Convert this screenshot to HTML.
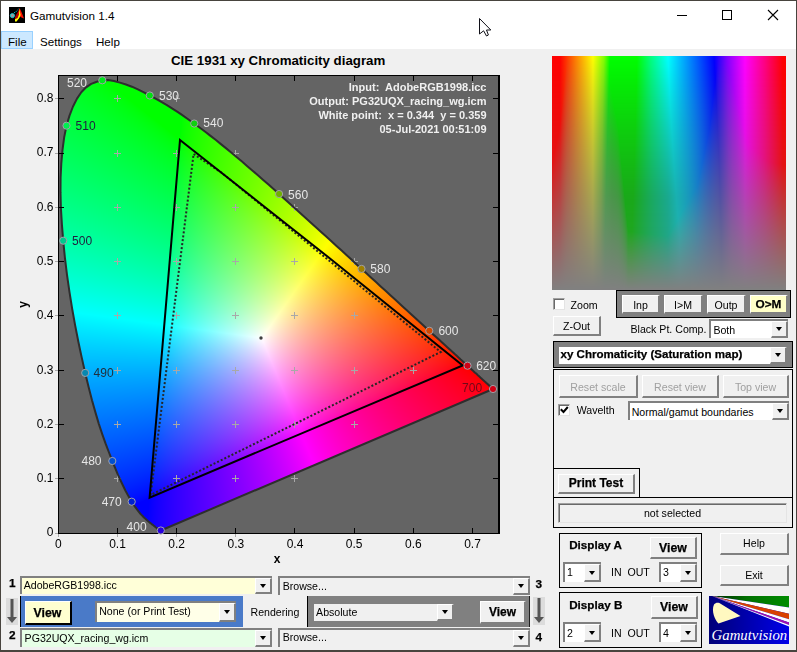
<!DOCTYPE html>
<html><head><meta charset="utf-8">
<style>
html,body{margin:0;padding:0;}
body{width:797px;height:652px;overflow:hidden;position:relative;background:#f0f0f0;font-family:"Liberation Sans",sans-serif;color:#000;}
.a{position:absolute;}
.t{position:absolute;white-space:nowrap;font-size:12px;line-height:14px;}
.b{font-weight:bold;-webkit-text-stroke:0.25px #000;}
.btn{position:absolute;box-sizing:border-box;background:#f0f0f0;border-top:1px solid #fff;border-left:1px solid #fff;border-right:1px solid #696969;border-bottom:1px solid #696969;box-shadow:inset -1px -1px 0 #a0a0a0;font-size:11px;text-align:center;white-space:nowrap;}
.sunk{position:absolute;box-sizing:border-box;border-top:1px solid #a0a0a0;border-left:1px solid #a0a0a0;border-right:1px solid #fff;border-bottom:1px solid #fff;box-shadow:inset 1px 1px 0 #696969;}
.dd{position:absolute;box-sizing:border-box;background:#fff;border:2px solid #8a8a8a;border-right-color:#b4b4b4;border-bottom-color:#b4b4b4;font-size:11px;white-space:nowrap;overflow:hidden;}
.dd .tx{position:absolute;left:3px;top:2px;line-height:13px;}
.dd .ar{position:absolute;right:0;top:0;bottom:0;width:16px;box-sizing:border-box;background:#f0f0f0;border-top:1px solid #fff;border-left:1px solid #fff;border-right:1px solid #696969;border-bottom:1px solid #696969;box-shadow:inset -1px -1px 0 #a0a0a0;}
.dd .ar:after{content:"";position:absolute;left:4px;top:6px;border-left:3.5px solid transparent;border-right:3.5px solid transparent;border-top:4px solid #000;}
</style></head><body>
<!-- window chrome -->
<div class="a" style="left:0;top:0;width:797px;height:31px;background:#fff;"></div>
<div class="a" style="left:0;top:31px;width:797px;height:18px;background:#fff;"></div>
<div class="a" style="left:1px;top:31px;width:32px;height:18px;box-sizing:border-box;background:#cce8ff;border:1px solid #99d1ff;"></div>
<div class="a" style="left:0;top:0;width:797px;height:1px;background:#48443e;"></div>
<div class="a" style="left:0;top:0;width:1px;height:652px;background:#48443e;"></div>
<div class="a" style="left:796px;top:0;width:1px;height:652px;background:#48443e;"></div>
<div class="a" style="left:0;top:650px;width:797px;height:2px;background:#48443e;"></div>
<!-- app icon -->
<svg class="a" style="left:9px;top:7px" width="16" height="16" viewBox="0 0 16 16">
<rect width="16" height="16" fill="#000"/>
<path d="M10.5,1 L12.5,5 L15,11.5 L12.5,10.5 L11,9.5 L8.5,13 L6,13.5 L6.5,10 L9,5.5 Z" fill="#ff1000"/>
<path d="M9,5 L10.3,9 L7.5,12.5 L5.8,11.5 L7,8 Z" fill="#b00000"/>
<path d="M10.3,1.8 L11.6,8 L10.2,11 L7.6,14.5 L6,14.5 L6,12.2 L8.6,11 L10,7.5 Z" fill="#ffff00"/>
<circle cx="3.4" cy="8.6" r="2.1" fill="#a09898" stroke="#00e0e8" stroke-width="0.8"/>
<path d="M5,5.8 L7,4.8 L8.5,3.2 L9.6,1.6" stroke="#00c0c8" stroke-width="1" fill="none" stroke-dasharray="1.2,0.8"/>
</svg>
<div class="t" style="left:30px;top:9px;font-size:11.7px;">Gamutvision 1.4</div>
<!-- window buttons -->
<div class="a" style="left:677px;top:15px;width:10px;height:1px;background:#000;"></div>
<div class="a" style="left:722px;top:10px;width:10px;height:10px;box-sizing:border-box;border:1px solid #000;"></div>
<svg class="a" style="left:767px;top:9px" width="12" height="12" viewBox="0 0 12 12"><path d="M1,1 L11,11 M11,1 L1,11" stroke="#000" stroke-width="1.1"/></svg>
<!-- cursor -->
<svg class="a" style="left:476px;top:15px" width="20" height="25" viewBox="476 15 20 25"><path d="M479.5,18.5 L479.5,34 L483.6,30.8 L486.5,36 L488.4,35 L486.5,30 L490.8,30 Z" fill="#fff" stroke="#101018" stroke-width="1" stroke-linejoin="round"/></svg>
<!-- menu -->
<div class="t" style="left:8px;top:34.5px;font-size:11.6px;">File</div>
<div class="t" style="left:40px;top:34.5px;font-size:11.6px;">Settings</div>
<div class="t" style="left:96px;top:34.5px;font-size:11.6px;">Help</div>
<!-- plot -->
<div class="t" style="left:171px;top:53px;font-size:13.3px;font-weight:bold;line-height:16px;">CIE 1931 xy Chromaticity diagram</div>
<div class="a" style="left:59px;top:76px;width:439px;height:457px;background:#646464;"></div>
<div class="a" style="left:59px;top:76px;width:439px;height:456px;clip-path:polygon(101.8px 454.5px,101.8px 454.5px,101.8px 454.5px,101.7px 454.5px,101.7px 454.5px,101.6px 454.5px,101.6px 454.5px,101.5px 454.5px,101.4px 454.5px,101.4px 454.5px,101.3px 454.5px,101.2px 454.5px,101.1px 454.5px,101.0px 454.5px,100.9px 454.4px,100.8px 454.4px,100.7px 454.3px,100.6px 454.3px,100.4px 454.2px,100.2px 454.1px,100.1px 454.0px,99.9px 453.8px,99.7px 453.7px,99.5px 453.5px,99.2px 453.4px,99.0px 453.2px,98.7px 452.9px,98.4px 452.7px,98.1px 452.4px,97.7px 452.1px,97.4px 451.8px,97.0px 451.5px,96.6px 451.2px,96.1px 450.8px,95.7px 450.4px,95.2px 450.0px,94.6px 449.6px,94.0px 449.1px,93.4px 448.6px,92.7px 448.1px,92.0px 447.5px,91.2px 446.9px,90.4px 446.2px,89.5px 445.5px,88.6px 444.8px,87.7px 443.9px,86.7px 443.0px,85.6px 442.1px,84.5px 441.0px,83.4px 439.8px,82.2px 438.6px,80.9px 437.2px,79.5px 435.4px,78.0px 433.4px,76.3px 431.2px,74.6px 428.7px,72.7px 425.7px,70.8px 422.4px,68.7px 418.8px,66.5px 414.7px,64.2px 410.0px,61.7px 404.7px,59.0px 398.8px,56.3px 392.3px,53.3px 385.0px,50.2px 377.0px,46.8px 368.2px,43.4px 358.6px,39.9px 348.1px,36.5px 336.6px,33.0px 324.2px,29.6px 310.9px,26.2px 296.9px,22.8px 281.9px,19.4px 266.0px,16.2px 249.6px,13.2px 233.0px,10.5px 216.1px,8.0px 198.8px,5.9px 181.6px,4.2px 164.7px,2.9px 148.3px,1.9px 132.1px,1.5px 116.4px,1.6px 101.5px,2.3px 87.4px,3.5px 73.8px,5.2px 61.1px,7.5px 49.7px,10.5px 39.6px,14.0px 30.5px,18.0px 22.6px,22.3px 16.2px,27.1px 11.3px,32.2px 7.9px,37.7px 5.7px,43.3px 4.3px,49.0px 4.1px,54.9px 5.0px,60.9px 6.6px,66.9px 8.5px,72.9px 10.7px,78.9px 13.4px,84.9px 16.4px,90.8px 19.5px,96.6px 22.6px,102.3px 25.9px,107.9px 29.2px,113.4px 32.7px,118.9px 36.2px,124.4px 39.9px,129.8px 43.7px,135.2px 47.5px,140.5px 51.5px,145.9px 55.5px,151.2px 59.6px,156.6px 63.8px,161.9px 68.1px,167.2px 72.4px,172.5px 76.8px,177.8px 81.2px,183.0px 85.6px,188.3px 90.2px,193.6px 94.7px,198.9px 99.3px,204.2px 103.9px,209.5px 108.6px,214.8px 113.3px,220.1px 118.0px,225.3px 122.7px,230.6px 127.5px,235.9px 132.2px,241.1px 136.9px,246.4px 141.7px,251.6px 146.4px,256.9px 151.2px,262.1px 155.9px,267.2px 160.6px,272.4px 165.3px,277.5px 170.0px,282.6px 174.6px,287.7px 179.2px,292.7px 183.8px,297.6px 188.4px,302.5px 192.9px,307.4px 197.3px,312.2px 201.7px,317.0px 206.1px,321.7px 210.4px,326.3px 214.6px,330.8px 218.7px,335.3px 222.8px,339.6px 226.8px,343.9px 230.7px,348.1px 234.5px,352.1px 238.2px,356.0px 241.8px,359.8px 245.2px,363.4px 248.5px,366.9px 251.7px,370.3px 254.8px,373.6px 257.9px,376.8px 260.8px,379.9px 263.6px,382.8px 266.3px,385.6px 268.8px,388.3px 271.2px,390.8px 273.5px,393.3px 275.7px,395.5px 277.8px,397.7px 279.8px,399.8px 281.7px,401.7px 283.5px,403.6px 285.2px,405.3px 286.8px,406.9px 288.3px,408.5px 289.7px,409.9px 291.0px,411.3px 292.3px,412.6px 293.5px,413.8px 294.6px,415.0px 295.7px,416.1px 296.7px,417.2px 297.6px,418.2px 298.5px,419.1px 299.4px,420.1px 300.3px,420.9px 301.1px,421.8px 301.9px,422.6px 302.6px,423.3px 303.3px,424.0px 303.9px,424.7px 304.6px,425.4px 305.2px,426.0px 305.7px,426.6px 306.2px,427.1px 306.7px,427.6px 307.1px,428.0px 307.6px,428.5px 307.9px,428.9px 308.3px,429.3px 308.7px,429.6px 309.0px,429.9px 309.3px,430.2px 309.6px,430.5px 309.8px,430.8px 310.1px,431.0px 310.3px,431.2px 310.5px,431.4px 310.7px,431.6px 310.8px,431.7px 311.0px,431.9px 311.1px,432.0px 311.2px,432.2px 311.3px,432.3px 311.5px,432.4px 311.6px,432.5px 311.7px,432.6px 311.8px,432.7px 311.9px,432.8px 312.0px,432.9px 312.1px,433.0px 312.1px,433.2px 312.2px,433.3px 312.3px,433.3px 312.4px,433.4px 312.5px,433.5px 312.6px,433.6px 312.7px,433.7px 312.7px,433.7px 312.8px,433.8px 312.8px,433.8px 312.9px,433.9px 312.9px,433.9px 312.9px,433.9px 313.0px,434.0px 313.0px,434.0px 313.0px,434.0px 313.0px,434.0px 313.0px,434.0px 313.0px);background:radial-gradient(circle at 202px 262px,#fff 0,rgba(255,255,255,0.85) 25px,rgba(255,255,255,0.35) 80px,rgba(255,255,255,0) 140px),conic-gradient(from 0deg at 202px 262px,#80ff00 7deg,#ffff00 55deg,#ff0000 97deg,#ff00ff 146deg,#8000ff 180deg,#0000ff 215deg,#00ffff 275deg,#00ff80 300deg,#00ff00 328deg,#80ff00 367deg);"></div>
<canvas id="cv" class="a" style="left:59px;top:76px" width="439" height="456"></canvas>
<svg class="a" style="left:0;top:0" width="797" height="652" viewBox="0 0 797 652">
<path d="M55.0,98.5h7M58.5,95.0v7M114.0,98.5h7M117.5,95.0v7M173.0,98.5h7M176.5,95.0v7M55.0,153.5h7M58.5,150.0v7M114.0,153.5h7M117.5,150.0v7M173.0,153.5h7M176.5,150.0v7M232.0,153.5h7M235.5,150.0v7M55.0,207.5h7M58.5,204.0v7M114.0,207.5h7M117.5,204.0v7M173.0,207.5h7M176.5,204.0v7M232.0,207.5h7M235.5,204.0v7M291.0,207.5h7M294.5,204.0v7M55.0,261.5h7M58.5,258.0v7M114.0,261.5h7M117.5,258.0v7M173.0,261.5h7M176.5,258.0v7M232.0,261.5h7M235.5,258.0v7M291.0,261.5h7M294.5,258.0v7M351.0,261.5h7M354.5,258.0v7M55.0,315.5h7M58.5,312.0v7M114.0,315.5h7M117.5,312.0v7M173.0,315.5h7M176.5,312.0v7M232.0,315.5h7M235.5,312.0v7M291.0,315.5h7M294.5,312.0v7M351.0,315.5h7M354.5,312.0v7M55.0,370.5h7M58.5,367.0v7M114.0,370.5h7M117.5,367.0v7M173.0,370.5h7M176.5,367.0v7M232.0,370.5h7M235.5,367.0v7M291.0,370.5h7M294.5,367.0v7M351.0,370.5h7M354.5,367.0v7M410.0,370.5h7M413.5,367.0v7M55.0,424.5h7M58.5,421.0v7M114.0,424.5h7M117.5,421.0v7M173.0,424.5h7M176.5,421.0v7M232.0,424.5h7M235.5,421.0v7M291.0,424.5h7M294.5,421.0v7M351.0,424.5h7M354.5,421.0v7M55.0,478.5h7M58.5,475.0v7M114.0,478.5h7M117.5,475.0v7M173.0,478.5h7M176.5,475.0v7M232.0,478.5h7M235.5,475.0v7M291.0,478.5h7M294.5,475.0v7M55.0,533.5h7M58.5,530.0v7M114.0,533.5h7M117.5,530.0v7M173.0,533.5h7M176.5,530.0v7M232.0,533.5h7M235.5,530.0v7" stroke="#a8a8a8" stroke-width="1" fill="none"/>
<path d="M160.8,530.5 L160.8,530.5 L160.8,530.5 L160.7,530.5 L160.7,530.5 L160.6,530.5 L160.6,530.5 L160.5,530.5 L160.4,530.5 L160.4,530.5 L160.3,530.5 L160.2,530.5 L160.1,530.5 L160.0,530.5 L159.9,530.4 L159.8,530.4 L159.7,530.3 L159.6,530.3 L159.4,530.2 L159.2,530.1 L159.1,530.0 L158.9,529.8 L158.7,529.7 L158.5,529.5 L158.2,529.4 L158.0,529.2 L157.7,528.9 L157.4,528.7 L157.1,528.4 L156.7,528.1 L156.4,527.8 L156.0,527.5 L155.6,527.2 L155.1,526.8 L154.7,526.4 L154.2,526.0 L153.6,525.6 L153.0,525.1 L152.4,524.6 L151.7,524.1 L151.0,523.5 L150.2,522.9 L149.4,522.2 L148.5,521.5 L147.6,520.8 L146.7,519.9 L145.7,519.0 L144.6,518.1 L143.5,517.0 L142.4,515.8 L141.2,514.6 L139.9,513.2 L138.5,511.4 L137.0,509.4 L135.3,507.2 L133.6,504.7 L131.7,501.7 L129.8,498.4 L127.7,494.8 L125.5,490.7 L123.2,486.0 L120.7,480.7 L118.0,474.8 L115.3,468.3 L112.3,461.0 L109.2,453.0 L105.8,444.2 L102.4,434.6 L98.9,424.1 L95.5,412.6 L92.0,400.2 L88.6,386.9 L85.2,372.9 L81.8,357.9 L78.4,342.0 L75.2,325.6 L72.2,309.0 L69.5,292.1 L67.0,274.8 L64.9,257.6 L63.2,240.7 L61.9,224.3 L60.9,208.1 L60.5,192.4 L60.6,177.5 L61.3,163.4 L62.5,149.8 L64.2,137.1 L66.5,125.7 L69.5,115.6 L73.0,106.5 L77.0,98.6 L81.3,92.2 L86.1,87.3 L91.2,83.9 L96.7,81.7 L102.3,80.3 L108.0,80.1 L113.9,81.0 L119.9,82.6 L125.9,84.5 L131.9,86.7 L137.9,89.4 L143.9,92.4 L149.8,95.5 L155.6,98.6 L161.3,101.9 L166.9,105.2 L172.4,108.7 L177.9,112.2 L183.4,115.9 L188.8,119.7 L194.2,123.5 L199.5,127.5 L204.9,131.5 L210.2,135.6 L215.6,139.8 L220.9,144.1 L226.2,148.4 L231.5,152.8 L236.8,157.2 L242.0,161.6 L247.3,166.2 L252.6,170.7 L257.9,175.3 L263.2,179.9 L268.5,184.6 L273.8,189.3 L279.1,194.0 L284.3,198.7 L289.6,203.5 L294.9,208.2 L300.1,212.9 L305.4,217.7 L310.6,222.4 L315.9,227.2 L321.1,231.9 L326.2,236.6 L331.4,241.3 L336.5,246.0 L341.6,250.6 L346.7,255.2 L351.7,259.8 L356.6,264.4 L361.5,268.9 L366.4,273.3 L371.2,277.7 L376.0,282.1 L380.7,286.4 L385.3,290.6 L389.8,294.7 L394.3,298.8 L398.6,302.8 L402.9,306.7 L407.1,310.5 L411.1,314.2 L415.0,317.8 L418.8,321.2 L422.4,324.5 L425.9,327.7 L429.3,330.8 L432.6,333.9 L435.8,336.8 L438.9,339.6 L441.8,342.3 L444.6,344.8 L447.3,347.2 L449.8,349.5 L452.3,351.7 L454.5,353.8 L456.7,355.8 L458.8,357.7 L460.7,359.5 L462.6,361.2 L464.3,362.8 L465.9,364.3 L467.5,365.7 L468.9,367.0 L470.3,368.3 L471.6,369.5 L472.8,370.6 L474.0,371.7 L475.1,372.7 L476.2,373.6 L477.2,374.5 L478.1,375.4 L479.1,376.3 L479.9,377.1 L480.8,377.9 L481.6,378.6 L482.3,379.3 L483.0,379.9 L483.7,380.6 L484.4,381.2 L485.0,381.7 L485.6,382.2 L486.1,382.7 L486.6,383.1 L487.0,383.6 L487.5,383.9 L487.9,384.3 L488.3,384.7 L488.6,385.0 L488.9,385.3 L489.2,385.6 L489.5,385.8 L489.8,386.1 L490.0,386.3 L490.2,386.5 L490.4,386.7 L490.6,386.8 L490.7,387.0 L490.9,387.1 L491.0,387.2 L491.2,387.3 L491.3,387.5 L491.4,387.6 L491.5,387.7 L491.6,387.8 L491.7,387.9 L491.8,388.0 L491.9,388.1 L492.0,388.1 L492.2,388.2 L492.3,388.3 L492.3,388.4 L492.4,388.5 L492.5,388.6 L492.6,388.7 L492.7,388.7 L492.7,388.8 L492.8,388.8 L492.8,388.9 L492.9,388.9 L492.9,388.9 L492.9,389.0 L493.0,389.0 L493.0,389.0 L493.0,389.0 L493.0,389.0 L493.0,389.0 Z" fill="none" stroke="#2e2e2e" stroke-width="2" stroke-linejoin="round"/>
<path d="M193.6,154 L222,173 L440.7,352 L150.6,495 Z" fill="none" stroke="#262626" stroke-width="2" stroke-dasharray="2,2"/>
<path d="M180,140 L330,258.5 L462.7,365.4 L149.6,497.6 Z" fill="none" stroke="#000" stroke-width="2" stroke-linejoin="miter"/>
<path d="M58,75h442v1h-442ZM58,75h1v459h-1ZM498,75h2v459h-2ZM58,533h442v1h-442Z" fill="#000"/>
<path d="M117.5,533v-5M117.5,76v5M176.5,533v-5M176.5,76v5M235.5,533v-5M235.5,76v5M294.5,533v-5M294.5,76v5M354.5,533v-5M354.5,76v5M413.5,533v-5M413.5,76v5M472.5,533v-5M472.5,76v5M59,478.5h5M498,478.5h-5M59,424.5h5M498,424.5h-5M59,370.5h5M498,370.5h-5M59,315.5h5M498,315.5h-5M59,261.5h5M498,261.5h-5M59,207.5h5M498,207.5h-5M59,153.5h5M498,153.5h-5M59,98.5h5M498,98.5h-5" stroke="#000" stroke-width="1" fill="none"/>
<circle cx="261" cy="338" r="1.7" fill="#404040"/>
<circle cx="160.8" cy="530.5" r="3.6" fill="#2800e0" stroke="#a0a0a8" stroke-width="1"/>
<circle cx="131.7" cy="501.7" r="3.6" fill="#0020d0" stroke="#a0a0a8" stroke-width="1"/>
<circle cx="112.3" cy="461.0" r="3.6" fill="#0050d0" stroke="#a0a0a8" stroke-width="1"/>
<circle cx="85.2" cy="372.9" r="3.6" fill="#0888b0" stroke="#a0a0a8" stroke-width="1"/>
<circle cx="63.2" cy="240.7" r="3.6" fill="#00c88c" stroke="#a0a0a8" stroke-width="1"/>
<circle cx="66.5" cy="125.7" r="3.6" fill="#00f050" stroke="#a0a0a8" stroke-width="1"/>
<circle cx="102.3" cy="80.3" r="3.6" fill="#00e81c" stroke="#a0a0a8" stroke-width="1"/>
<circle cx="149.8" cy="95.5" r="3.6" fill="#00e010" stroke="#a0a0a8" stroke-width="1"/>
<circle cx="194.2" cy="123.5" r="3.6" fill="#10d010" stroke="#a0a0a8" stroke-width="1"/>
<circle cx="279.1" cy="194.0" r="3.6" fill="#70b000" stroke="#a0a0a8" stroke-width="1"/>
<circle cx="361.5" cy="268.9" r="3.6" fill="#a08000" stroke="#a0a0a8" stroke-width="1"/>
<circle cx="429.3" cy="330.8" r="3.6" fill="#d04800" stroke="#a0a0a8" stroke-width="1"/>
<circle cx="467.5" cy="365.7" r="3.6" fill="#d00014" stroke="#a0a0a8" stroke-width="1"/>
<circle cx="493.0" cy="389.0" r="3.6" fill="#d00014" stroke="#a0a0a8" stroke-width="1"/>
<text x="67.0" y="86.9" fill="#e6e6e6" font-size="12">520</text>
<text x="159.0" y="99.6" fill="#e6e6e6" font-size="12">530</text>
<text x="75.6" y="129.9" fill="#202040" font-size="12">510</text>
<text x="203.3" y="127.2" fill="#e6e6e6" font-size="12">540</text>
<text x="72.1" y="244.9" fill="#202040" font-size="12">500</text>
<text x="93.6" y="376.6" fill="#203040" font-size="12">490</text>
<text x="81.5" y="464.6" fill="#e6e6e6" font-size="12">480</text>
<text x="101.7" y="506.2" fill="#e6e6e6" font-size="12">470</text>
<text x="126.6" y="531.1" fill="#e6e6e6" font-size="12">400</text>
<text x="288.1" y="198.6" fill="#e6e6e6" font-size="12">560</text>
<text x="370.3" y="272.7" fill="#e6e6e6" font-size="12">580</text>
<text x="438.4" y="334.7" fill="#e6e6e6" font-size="12">600</text>
<text x="476.2" y="369.9" fill="#e6e6e6" font-size="12">620</text>
<text x="462.1" y="391.7" fill="#700818" font-size="12">700</text>
<text x="58.3" y="548" text-anchor="middle" font-size="12">0</text>
<text x="117.5" y="548" text-anchor="middle" font-size="12">0.1</text>
<text x="176.6" y="548" text-anchor="middle" font-size="12">0.2</text>
<text x="235.8" y="548" text-anchor="middle" font-size="12">0.3</text>
<text x="295.0" y="548" text-anchor="middle" font-size="12">0.4</text>
<text x="354.2" y="548" text-anchor="middle" font-size="12">0.5</text>
<text x="413.3" y="548" text-anchor="middle" font-size="12">0.6</text>
<text x="472.5" y="548" text-anchor="middle" font-size="12">0.7</text>
<text x="53.5" y="536.4" text-anchor="end" font-size="12">0</text>
<text x="53.5" y="482.1" text-anchor="end" font-size="12">0.1</text>
<text x="53.5" y="427.8" text-anchor="end" font-size="12">0.2</text>
<text x="53.5" y="373.5" text-anchor="end" font-size="12">0.3</text>
<text x="53.5" y="319.2" text-anchor="end" font-size="12">0.4</text>
<text x="53.5" y="264.9" text-anchor="end" font-size="12">0.5</text>
<text x="53.5" y="210.6" text-anchor="end" font-size="12">0.6</text>
<text x="53.5" y="156.3" text-anchor="end" font-size="12">0.7</text>
<text x="53.5" y="102.0" text-anchor="end" font-size="12">0.8</text>
<text x="277" y="563" text-anchor="middle" font-size="12" font-weight="bold">x</text>
<text transform="translate(27,304.5) rotate(-90)" text-anchor="middle" font-size="12" font-weight="bold">y</text>
<text x="486.5" y="91.0" text-anchor="end" font-size="11" font-weight="bold" fill="#f0f0f0" xml:space="preserve">Input:  AdobeRGB1998.icc</text>
<text x="486.5" y="105.0" text-anchor="end" font-size="11" font-weight="bold" fill="#f0f0f0" xml:space="preserve">Output: PG32UQX_racing_wg.icm</text>
<text x="486.5" y="119.0" text-anchor="end" font-size="11" font-weight="bold" fill="#f0f0f0" xml:space="preserve">White point:  x = 0.344  y = 0.359</text>
<text x="486.5" y="133.0" text-anchor="end" font-size="11" font-weight="bold" fill="#f0f0f0" xml:space="preserve">05-Jul-2021 00:51:09</text></svg>
<div class="a" style="left:552px;top:56px;width:234px;height:234px;background:linear-gradient(to bottom,rgba(128,128,128,0) 25%,rgba(128,128,128,0.5) 65%,#808080 100%),linear-gradient(to right,#f00 0,#f00 4%,#ff0 18%,#0f0 24%,#0f0 36%,#0ff 50%,#00f 69%,#f0f 82%,#f00 99%);"></div>
<canvas id="sp" class="a" style="left:552px;top:56px" width="234" height="234"></canvas>
<div class="a" style="left:553px;top:298px;width:12px;height:12px;box-sizing:border-box;background:#fff;border-top:1px solid #a0a0a0;border-left:1px solid #a0a0a0;border-right:1px solid #e4e4e4;border-bottom:1px solid #e4e4e4;box-shadow:inset 1px 1px 0 #696969;"></div>
<div class="t" style="left:570.6px;top:299.53px;font-size:10.60px;line-height:10.60px;">Zoom</div>
<div class="a" style="left:616px;top:290px;width:175px;height:28px;box-sizing:border-box;border:1px solid #000;background:#808080;"></div>
<div class="a" style="left:622px;top:295px;width:38px;height:19px;box-sizing:border-box;background:#f0f0f0;border-top:1px solid #fff;border-left:1px solid #fff;border-right:2px solid #808080;border-bottom:2px solid #808080;"></div>
<div class="t" style="left:622.0px;top:299.63px;width:37.0px;text-align:center;font-size:10.60px;line-height:10.60px;">Inp</div>
<div class="a" style="left:664px;top:295px;width:39px;height:19px;box-sizing:border-box;background:#f0f0f0;border-top:1px solid #fff;border-left:1px solid #fff;border-right:2px solid #808080;border-bottom:2px solid #808080;"></div>
<div class="t" style="left:664.0px;top:299.63px;width:38.0px;text-align:center;font-size:10.60px;line-height:10.60px;">I&gt;M</div>
<div class="a" style="left:707px;top:295px;width:39px;height:19px;box-sizing:border-box;background:#f0f0f0;border-top:1px solid #fff;border-left:1px solid #fff;border-right:2px solid #808080;border-bottom:2px solid #808080;"></div>
<div class="t" style="left:707.0px;top:299.63px;width:38.0px;text-align:center;font-size:10.60px;line-height:10.60px;">Outp</div>
<div class="a" style="left:750px;top:295px;width:38px;height:19px;box-sizing:border-box;background:#ffffc8;border-top:1px solid #fff;border-left:1px solid #fff;border-right:2px solid #808080;border-bottom:2px solid #808080;"></div>
<div class="t" style="left:750.0px;top:298.61px;width:37.0px;text-align:center;font-size:11.80px;line-height:11.80px;font-weight:bold;-webkit-text-stroke:0.25px currentColor;">O&gt;M</div>
<div class="a" style="left:553px;top:316px;width:48px;height:20px;box-sizing:border-box;background:#f0f0f0;border-top:1px solid #fff;border-left:1px solid #fff;border-right:2px solid #808080;border-bottom:2px solid #808080;"></div>
<div class="t" style="left:553.0px;top:320.93px;width:47.0px;text-align:center;font-size:10.60px;line-height:10.60px;">Z-Out</div>
<div class="t" style="left:630.5px;top:323.83px;font-size:10.60px;line-height:10.60px;">Black Pt. Comp.</div>
<div class="a" style="left:709px;top:319px;width:79px;height:19px;box-sizing:border-box;background:#fff;border-top:2px solid #808080;border-left:2px solid #808080;"></div>
<div class="a" style="left:771px;top:321px;width:17px;height:17px;box-sizing:border-box;background:#f0f0f0;border-top:1px solid #fff;border-left:1px solid #fff;border-right:2px solid #808080;border-bottom:2px solid #808080;"></div>
<div class="a" style="left:776px;top:327px;width:0;height:0;border-left:3.5px solid transparent;border-right:3.5px solid transparent;border-top:4px solid #000;"></div>
<div class="t" style="left:713.4px;top:324.93px;font-size:10.60px;line-height:10.60px;">Both</div>
<div class="a" style="left:553px;top:341px;width:240px;height:27px;box-sizing:border-box;border:1px solid #000;background:#808080;"></div>
<div class="a" style="left:557px;top:345px;width:230px;height:19px;box-sizing:border-box;background:#fff;border-top:2px solid #808080;border-left:2px solid #808080;"></div>
<div class="a" style="left:770px;top:347px;width:17px;height:17px;box-sizing:border-box;background:#f0f0f0;border-top:1px solid #fff;border-left:1px solid #fff;border-right:2px solid #808080;border-bottom:2px solid #808080;"></div>
<div class="a" style="left:775px;top:353px;width:0;height:0;border-left:3.5px solid transparent;border-right:3.5px solid transparent;border-top:4px solid #000;"></div>
<div class="t" style="left:560.5px;top:348.61px;font-size:11.57px;line-height:11.57px;font-weight:bold;-webkit-text-stroke:0.25px currentColor;">xy Chromaticity (Saturation map)</div>
<div class="a" style="left:553px;top:369px;width:240px;height:159px;box-sizing:border-box;border:1px solid #000;"></div>
<div class="a" style="left:559px;top:375px;width:79px;height:23px;box-sizing:border-box;background:#f0f0f0;border-top:1px solid #fff;border-left:1px solid #fff;border-right:2px solid #808080;border-bottom:2px solid #808080;"></div>
<div class="t" style="left:559.0px;top:381.63px;width:78.0px;text-align:center;font-size:10.60px;line-height:10.60px;color:#a0a0a0;">Reset scale</div>
<div class="a" style="left:642px;top:375px;width:77px;height:23px;box-sizing:border-box;background:#f0f0f0;border-top:1px solid #fff;border-left:1px solid #fff;border-right:2px solid #808080;border-bottom:2px solid #808080;"></div>
<div class="t" style="left:642.0px;top:381.63px;width:76.0px;text-align:center;font-size:10.60px;line-height:10.60px;color:#a0a0a0;">Reset view</div>
<div class="a" style="left:723px;top:375px;width:66px;height:23px;box-sizing:border-box;background:#f0f0f0;border-top:1px solid #fff;border-left:1px solid #fff;border-right:2px solid #808080;border-bottom:2px solid #808080;"></div>
<div class="t" style="left:723.0px;top:381.63px;width:65.0px;text-align:center;font-size:10.60px;line-height:10.60px;color:#a0a0a0;">Top view</div>
<div class="a" style="left:558px;top:404px;width:12px;height:12px;box-sizing:border-box;background:#fff;border-top:1px solid #a0a0a0;border-left:1px solid #a0a0a0;border-right:1px solid #e4e4e4;border-bottom:1px solid #e4e4e4;box-shadow:inset 1px 1px 0 #696969;"></div>
<svg class="a" style="left:558px;top:404px" width="12" height="12" viewBox="0 0 12 12"><path d="M2.8,5.2 L5.5,8 L9.8,3" stroke="#000" stroke-width="2" fill="none"/></svg>
<div class="t" style="left:576.7px;top:405.03px;font-size:10.60px;line-height:10.60px;">Wavelth</div>
<div class="a" style="left:628px;top:401px;width:161px;height:19px;box-sizing:border-box;background:#fff;border-top:2px solid #808080;border-left:2px solid #808080;"></div>
<div class="a" style="left:772px;top:403px;width:17px;height:17px;box-sizing:border-box;background:#f0f0f0;border-top:1px solid #fff;border-left:1px solid #fff;border-right:2px solid #808080;border-bottom:2px solid #808080;"></div>
<div class="a" style="left:777px;top:409px;width:0;height:0;border-left:3.5px solid transparent;border-right:3.5px solid transparent;border-top:4px solid #000;"></div>
<div class="t" style="left:631.7px;top:406.63px;font-size:10.60px;line-height:10.60px;">Normal/gamut boundaries</div>
<div class="a" style="left:553px;top:468px;width:87px;height:30px;box-sizing:border-box;border:1px solid #000;border-bottom:none;"></div>
<div class="a" style="left:553px;top:497px;width:240px;height:1px;box-sizing:border-box;background:#000;"></div>
<div class="a" style="left:558px;top:474px;width:77px;height:20px;box-sizing:border-box;background:#f0f0f0;border-top:1px solid #fff;border-left:1px solid #fff;border-right:2px solid #808080;border-bottom:2px solid #808080;"></div>
<div class="t" style="left:558.0px;top:477.04px;width:76.0px;text-align:center;font-size:12.00px;line-height:12.00px;font-weight:bold;-webkit-text-stroke:0.25px currentColor;">Print Test</div>
<div class="a" style="left:558px;top:503px;width:229px;height:20px;box-sizing:border-box;background:#f0f0f0;border-top:1px solid #a0a0a0;border-left:1px solid #a0a0a0;border-right:1px solid #e4e4e4;border-bottom:1px solid #e4e4e4;box-shadow:inset 1px 1px 0 #696969;"></div>
<div class="t" style="left:558.0px;top:507.93px;width:229.0px;text-align:center;font-size:10.60px;line-height:10.60px;">not selected</div>
<div class="a" style="left:559px;top:533px;width:143px;height:55px;box-sizing:border-box;border:1px solid #000;"></div>
<div class="t" style="left:569.2px;top:539.13px;font-size:11.66px;line-height:11.66px;font-weight:bold;-webkit-text-stroke:0.25px currentColor;">Display A</div>
<div class="a" style="left:650px;top:537px;width:47px;height:22px;box-sizing:border-box;background:#f0f0f0;border-top:1px solid #fff;border-left:1px solid #fff;border-right:2px solid #808080;border-bottom:2px solid #808080;"></div>
<div class="t" style="left:650.0px;top:541.89px;width:46.0px;text-align:center;font-size:12.30px;line-height:12.30px;font-weight:bold;-webkit-text-stroke:0.25px currentColor;">View</div>
<div class="a" style="left:563px;top:562px;width:38px;height:20px;box-sizing:border-box;background:#fff;border-top:2px solid #808080;border-left:2px solid #808080;"></div>
<div class="a" style="left:584px;top:564px;width:17px;height:18px;box-sizing:border-box;background:#f0f0f0;border-top:1px solid #fff;border-left:1px solid #fff;border-right:2px solid #808080;border-bottom:2px solid #808080;"></div>
<div class="a" style="left:589px;top:571px;width:0;height:0;border-left:3.5px solid transparent;border-right:3.5px solid transparent;border-top:4px solid #000;"></div>
<div class="t" style="left:567.0px;top:567.13px;font-size:10.60px;line-height:10.60px;">1</div>
<div class="t" style="left:611.0px;top:567.13px;font-size:10.60px;line-height:10.60px;">IN&nbsp; OUT</div>
<div class="a" style="left:659px;top:562px;width:38px;height:20px;box-sizing:border-box;background:#fff;border-top:2px solid #808080;border-left:2px solid #808080;"></div>
<div class="a" style="left:680px;top:564px;width:17px;height:18px;box-sizing:border-box;background:#f0f0f0;border-top:1px solid #fff;border-left:1px solid #fff;border-right:2px solid #808080;border-bottom:2px solid #808080;"></div>
<div class="a" style="left:685px;top:571px;width:0;height:0;border-left:3.5px solid transparent;border-right:3.5px solid transparent;border-top:4px solid #000;"></div>
<div class="t" style="left:663.0px;top:567.13px;font-size:10.60px;line-height:10.60px;">3</div>
<div class="a" style="left:559px;top:592px;width:143px;height:56px;box-sizing:border-box;border:1px solid #000;"></div>
<div class="t" style="left:569.2px;top:599.43px;font-size:11.66px;line-height:11.66px;font-weight:bold;-webkit-text-stroke:0.25px currentColor;">Display B</div>
<div class="a" style="left:651px;top:596px;width:47px;height:23px;box-sizing:border-box;background:#f0f0f0;border-top:1px solid #fff;border-left:1px solid #fff;border-right:2px solid #808080;border-bottom:2px solid #808080;"></div>
<div class="t" style="left:651.0px;top:601.39px;width:46.0px;text-align:center;font-size:12.30px;line-height:12.30px;font-weight:bold;-webkit-text-stroke:0.25px currentColor;">View</div>
<div class="a" style="left:563px;top:622px;width:38px;height:20px;box-sizing:border-box;background:#fff;border-top:2px solid #808080;border-left:2px solid #808080;"></div>
<div class="a" style="left:584px;top:624px;width:17px;height:18px;box-sizing:border-box;background:#f0f0f0;border-top:1px solid #fff;border-left:1px solid #fff;border-right:2px solid #808080;border-bottom:2px solid #808080;"></div>
<div class="a" style="left:589px;top:631px;width:0;height:0;border-left:3.5px solid transparent;border-right:3.5px solid transparent;border-top:4px solid #000;"></div>
<div class="t" style="left:567.0px;top:627.63px;font-size:10.60px;line-height:10.60px;">2</div>
<div class="t" style="left:611.0px;top:627.63px;font-size:10.60px;line-height:10.60px;">IN&nbsp; OUT</div>
<div class="a" style="left:659px;top:622px;width:38px;height:20px;box-sizing:border-box;background:#fff;border-top:2px solid #808080;border-left:2px solid #808080;"></div>
<div class="a" style="left:680px;top:624px;width:17px;height:18px;box-sizing:border-box;background:#f0f0f0;border-top:1px solid #fff;border-left:1px solid #fff;border-right:2px solid #808080;border-bottom:2px solid #808080;"></div>
<div class="a" style="left:685px;top:631px;width:0;height:0;border-left:3.5px solid transparent;border-right:3.5px solid transparent;border-top:4px solid #000;"></div>
<div class="t" style="left:663.0px;top:627.63px;font-size:10.60px;line-height:10.60px;">4</div>
<div class="a" style="left:720px;top:533px;width:69px;height:22px;box-sizing:border-box;background:#f0f0f0;border-top:1px solid #fff;border-left:1px solid #fff;border-right:2px solid #808080;border-bottom:2px solid #808080;"></div>
<div class="t" style="left:720.0px;top:538.33px;width:68.0px;text-align:center;font-size:10.60px;line-height:10.60px;">Help</div>
<div class="a" style="left:720px;top:565px;width:69px;height:21px;box-sizing:border-box;background:#f0f0f0;border-top:1px solid #fff;border-left:1px solid #fff;border-right:2px solid #808080;border-bottom:2px solid #808080;"></div>
<div class="t" style="left:720.0px;top:570.23px;width:68.0px;text-align:center;font-size:10.60px;line-height:10.60px;">Exit</div>
<div class="t" style="left:9.0px;top:578.41px;font-size:11.80px;line-height:11.80px;font-weight:bold;-webkit-text-stroke:0.25px currentColor;">1</div>
<div class="a" style="left:20px;top:576px;width:252px;height:18px;box-sizing:border-box;background:#ffffd8;border-top:2px solid #808080;border-left:2px solid #808080;"></div>
<div class="a" style="left:255px;top:578px;width:17px;height:16px;box-sizing:border-box;background:#f0f0f0;border-top:1px solid #fff;border-left:1px solid #fff;border-right:2px solid #808080;border-bottom:2px solid #808080;"></div>
<div class="a" style="left:260px;top:584px;width:0;height:0;border-left:3.5px solid transparent;border-right:3.5px solid transparent;border-top:4px solid #000;"></div>
<div class="t" style="left:23.7px;top:580.03px;font-size:10.60px;line-height:10.60px;">AdobeRGB1998.icc</div>
<div class="a" style="left:278px;top:576px;width:252px;height:19px;box-sizing:border-box;background:#f0f0f0;border-top:2px solid #808080;border-left:2px solid #808080;"></div>
<div class="a" style="left:513px;top:578px;width:17px;height:17px;box-sizing:border-box;background:#f0f0f0;border-top:1px solid #fff;border-left:1px solid #fff;border-right:2px solid #808080;border-bottom:2px solid #808080;"></div>
<div class="a" style="left:518px;top:584px;width:0;height:0;border-left:3.5px solid transparent;border-right:3.5px solid transparent;border-top:4px solid #000;"></div>
<div class="t" style="left:282.7px;top:581.03px;font-size:10.60px;line-height:10.60px;">Browse...</div>
<div class="t" style="left:535.6px;top:579.31px;font-size:11.80px;line-height:11.80px;font-weight:bold;-webkit-text-stroke:0.25px currentColor;">3</div>
<div class="a" style="left:6px;top:598px;width:12px;height:27px;box-sizing:border-box;background:#dcdcdc;"></div>
<svg class="a" style="left:6px;top:598px" width="12" height="27" viewBox="0 0 12 27"><path d="M4.5,1 h3 v18 h3.5 l-5,6 l-5,-6 h3.5 Z" fill="#555"/></svg>
<div class="a" style="left:533px;top:597px;width:12px;height:28px;box-sizing:border-box;background:#dcdcdc;"></div>
<svg class="a" style="left:533px;top:597px" width="12" height="28" viewBox="0 0 12 28"><path d="M4.5,1 h3 v19 h3.5 l-5,6 l-5,-6 h3.5 Z" fill="#555"/></svg>
<div class="a" style="left:20px;top:596px;width:223px;height:31px;box-sizing:border-box;background:#4a7ac8;border-left:1px solid #000;"></div>
<div class="a" style="left:25px;top:601px;width:47px;height:24px;box-sizing:border-box;background:#ffffd0;border-top:1px solid #fff;border-left:1px solid #fff;border-right:2px solid #000;border-bottom:2px solid #000;"></div>
<div class="t" style="left:25.0px;top:606.99px;width:45.0px;text-align:center;font-size:12.30px;line-height:12.30px;font-weight:bold;-webkit-text-stroke:0.25px currentColor;">View</div>
<div class="a" style="left:95px;top:601px;width:141px;height:21px;box-sizing:border-box;background:#ffffe8;border-top:2px solid #808080;border-left:2px solid #808080;"></div>
<div class="a" style="left:219px;top:603px;width:17px;height:19px;box-sizing:border-box;background:#f0f0f0;border-top:1px solid #fff;border-left:1px solid #fff;border-right:2px solid #808080;border-bottom:2px solid #808080;"></div>
<div class="a" style="left:224px;top:610px;width:0;height:0;border-left:3.5px solid transparent;border-right:3.5px solid transparent;border-top:4px solid #000;"></div>
<div class="t" style="left:99.2px;top:606.33px;font-size:10.60px;line-height:10.60px;">None (or Print Test)</div>
<div class="t" style="left:250.5px;top:606.93px;font-size:10.60px;line-height:10.60px;">Rendering</div>
<div class="a" style="left:307px;top:596px;width:223px;height:31px;box-sizing:border-box;background:#808080;border-left:1px solid #000;border-right:1px solid #202020;"></div>
<div class="a" style="left:312px;top:602px;width:142px;height:19px;box-sizing:border-box;background:#f0f0f0;border-top:2px solid #808080;border-left:2px solid #808080;"></div>
<div class="a" style="left:437px;top:604px;width:17px;height:17px;box-sizing:border-box;background:#f0f0f0;border-top:1px solid #fff;border-left:1px solid #fff;border-right:2px solid #808080;border-bottom:2px solid #808080;"></div>
<div class="a" style="left:442px;top:610px;width:0;height:0;border-left:3.5px solid transparent;border-right:3.5px solid transparent;border-top:4px solid #000;"></div>
<div class="t" style="left:316.1px;top:606.83px;font-size:10.60px;line-height:10.60px;">Absolute</div>
<div class="a" style="left:480px;top:601px;width:46px;height:23px;box-sizing:border-box;background:#f0f0f0;border-top:1px solid #fff;border-left:1px solid #fff;border-right:2px solid #808080;border-bottom:2px solid #808080;"></div>
<div class="t" style="left:480.0px;top:607.19px;width:45.0px;text-align:center;font-size:11.94px;line-height:11.94px;font-weight:bold;-webkit-text-stroke:0.25px currentColor;">View</div>
<div class="t" style="left:9.0px;top:630.01px;font-size:11.80px;line-height:11.80px;font-weight:bold;-webkit-text-stroke:0.25px currentColor;">2</div>
<div class="a" style="left:20px;top:628px;width:252px;height:19px;box-sizing:border-box;background:#e6ffe6;border-top:2px solid #808080;border-left:2px solid #808080;"></div>
<div class="a" style="left:255px;top:630px;width:17px;height:17px;box-sizing:border-box;background:#f0f0f0;border-top:1px solid #fff;border-left:1px solid #fff;border-right:2px solid #808080;border-bottom:2px solid #808080;"></div>
<div class="a" style="left:260px;top:636px;width:0;height:0;border-left:3.5px solid transparent;border-right:3.5px solid transparent;border-top:4px solid #000;"></div>
<div class="t" style="left:24.6px;top:633.03px;font-size:10.60px;line-height:10.60px;">PG32UQX_racing_wg.icm</div>
<div class="a" style="left:278px;top:628px;width:252px;height:19px;box-sizing:border-box;background:#f0f0f0;border-top:2px solid #808080;border-left:2px solid #808080;"></div>
<div class="a" style="left:513px;top:630px;width:17px;height:17px;box-sizing:border-box;background:#f0f0f0;border-top:1px solid #fff;border-left:1px solid #fff;border-right:2px solid #808080;border-bottom:2px solid #808080;"></div>
<div class="a" style="left:518px;top:636px;width:0;height:0;border-left:3.5px solid transparent;border-right:3.5px solid transparent;border-top:4px solid #000;"></div>
<div class="t" style="left:282.7px;top:632.03px;font-size:10.60px;line-height:10.60px;">Browse...</div>
<div class="t" style="left:535.6px;top:631.51px;font-size:11.80px;line-height:11.80px;font-weight:bold;-webkit-text-stroke:0.25px currentColor;">4</div><!-- logo -->
<svg class="a" style="left:709px;top:596px" width="80" height="48" viewBox="0 0 80 48">
<defs><linearGradient id="lg" x1="0" x2="1" y1="0" y2="0"><stop offset="0" stop-color="#000078"/><stop offset="1" stop-color="#0000e8"/></linearGradient>
<linearGradient id="gg" x1="0" x2="1"><stop offset="0" stop-color="#002800"/><stop offset="0.45" stop-color="#007000"/><stop offset="1" stop-color="#008c00"/></linearGradient></defs>
<rect width="80" height="48" fill="url(#lg)"/>
<path d="M3,0 L80,0 L80,11.5 Z" fill="url(#gg)"/>
<path d="M3,0 L80,11.5 L80,17.7 Z" fill="#fff"/>
<path d="M3,0 L80,17.7 L80,23.2 Z" fill="#d84000"/>
<path d="M3,0 L80,23.2 L80,26.5 Z" fill="#fff"/>
<path d="M3,0 L80,26.5 L80,29 Z" fill="#a010b0"/>
<path d="M3,0 L80,29 L80,30.5 Z" fill="#fff"/>
<path d="M5,8.5 C7,6 10,6.5 12,8 L31.5,20 L9.5,27.5 C6,24 2,15 5,8.5 Z" fill="#fff8c0"/>
<text x="2.6" y="44" font-family="Liberation Serif" font-style="italic" font-size="14.8" fill="#fff">Gamutvision</text>
</svg>
<script>
(function(){
var c=document.getElementById('cv');var ctx=c.getContext('2d');var W=c.width,H=c.height;
var off=document.createElement('canvas');off.width=W;off.height=H;var oc=off.getContext('2d');
var im=oc.createImageData(W,H),d=im.data;
var M=[[1.83341426,-0.49044666,-0.32196685],[-0.78269492,1.74059056,0.01136378],[0.05125597,-0.14362498,1.32299432]];
var G=1/1.4;
for(var j=0;j<H;j++){for(var i=0;i<W;i++){
var x=(59+i+0.5-58.3)/591.7,y=(533.1-(76+j+0.5))/543.0;if(y<0.001)y=0.001;
var X=x/y,Z=(1-x-y)/y;
var r=M[0][0]*X+M[0][1]+M[0][2]*Z,g=M[1][0]*X+M[1][1]+M[1][2]*Z,b=M[2][0]*X+M[2][1]+M[2][2]*Z;
if(r<0)r=0;if(g<0)g=0;if(b<0)b=0;var m=Math.max(r,g,b);if(m<=0)m=1;
var k=(j*W+i)*4;d[k]=255*Math.pow(r/m,G);d[k+1]=255*Math.pow(g/m,G);d[k+2]=255*Math.pow(b/m,G);d[k+3]=255;}}
oc.putImageData(im,0,0);
var P=[101.8,454.5,101.8,454.5,101.8,454.5,101.7,454.5,101.7,454.5,101.6,454.5,101.6,454.5,101.5,454.5,101.4,454.5,101.4,454.5,101.3,454.5,101.2,454.5,101.1,454.5,101.0,454.5,100.9,454.4,100.8,454.4,100.7,454.3,100.6,454.3,100.4,454.2,100.2,454.1,100.1,454.0,99.9,453.8,99.7,453.7,99.5,453.5,99.2,453.4,99.0,453.2,98.7,452.9,98.4,452.7,98.1,452.4,97.7,452.1,97.4,451.8,97.0,451.5,96.6,451.2,96.1,450.8,95.7,450.4,95.2,450.0,94.6,449.6,94.0,449.1,93.4,448.6,92.7,448.1,92.0,447.5,91.2,446.9,90.4,446.2,89.5,445.5,88.6,444.8,87.7,443.9,86.7,443.0,85.6,442.1,84.5,441.0,83.4,439.8,82.2,438.6,80.9,437.2,79.5,435.4,78.0,433.4,76.3,431.2,74.6,428.7,72.7,425.7,70.8,422.4,68.7,418.8,66.5,414.7,64.2,410.0,61.7,404.7,59.0,398.8,56.3,392.3,53.3,385.0,50.2,377.0,46.8,368.2,43.4,358.6,39.9,348.1,36.5,336.6,33.0,324.2,29.6,310.9,26.2,296.9,22.8,281.9,19.4,266.0,16.2,249.6,13.2,233.0,10.5,216.1,8.0,198.8,5.9,181.6,4.2,164.7,2.9,148.3,1.9,132.1,1.5,116.4,1.6,101.5,2.3,87.4,3.5,73.8,5.2,61.1,7.5,49.7,10.5,39.6,14.0,30.5,18.0,22.6,22.3,16.2,27.1,11.3,32.2,7.9,37.7,5.7,43.3,4.3,49.0,4.1,54.9,5.0,60.9,6.6,66.9,8.5,72.9,10.7,78.9,13.4,84.9,16.4,90.8,19.5,96.6,22.6,102.3,25.9,107.9,29.2,113.4,32.7,118.9,36.2,124.4,39.9,129.8,43.7,135.2,47.5,140.5,51.5,145.9,55.5,151.2,59.6,156.6,63.8,161.9,68.1,167.2,72.4,172.5,76.8,177.8,81.2,183.0,85.6,188.3,90.2,193.6,94.7,198.9,99.3,204.2,103.9,209.5,108.6,214.8,113.3,220.1,118.0,225.3,122.7,230.6,127.5,235.9,132.2,241.1,136.9,246.4,141.7,251.6,146.4,256.9,151.2,262.1,155.9,267.2,160.6,272.4,165.3,277.5,170.0,282.6,174.6,287.7,179.2,292.7,183.8,297.6,188.4,302.5,192.9,307.4,197.3,312.2,201.7,317.0,206.1,321.7,210.4,326.3,214.6,330.8,218.7,335.3,222.8,339.6,226.8,343.9,230.7,348.1,234.5,352.1,238.2,356.0,241.8,359.8,245.2,363.4,248.5,366.9,251.7,370.3,254.8,373.6,257.9,376.8,260.8,379.9,263.6,382.8,266.3,385.6,268.8,388.3,271.2,390.8,273.5,393.3,275.7,395.5,277.8,397.7,279.8,399.8,281.7,401.7,283.5,403.6,285.2,405.3,286.8,406.9,288.3,408.5,289.7,409.9,291.0,411.3,292.3,412.6,293.5,413.8,294.6,415.0,295.7,416.1,296.7,417.2,297.6,418.2,298.5,419.1,299.4,420.1,300.3,420.9,301.1,421.8,301.9,422.6,302.6,423.3,303.3,424.0,303.9,424.7,304.6,425.4,305.2,426.0,305.7,426.6,306.2,427.1,306.7,427.6,307.1,428.0,307.6,428.5,307.9,428.9,308.3,429.3,308.7,429.6,309.0,429.9,309.3,430.2,309.6,430.5,309.8,430.8,310.1,431.0,310.3,431.2,310.5,431.4,310.7,431.6,310.8,431.7,311.0,431.9,311.1,432.0,311.2,432.2,311.3,432.3,311.5,432.4,311.6,432.5,311.7,432.6,311.8,432.7,311.9,432.8,312.0,432.9,312.1,433.0,312.1,433.2,312.2,433.3,312.3,433.3,312.4,433.4,312.5,433.5,312.6,433.6,312.7,433.7,312.7,433.7,312.8,433.8,312.8,433.8,312.9,433.9,312.9,433.9,312.9,433.9,313.0,434.0,313.0,434.0,313.0,434.0,313.0,434.0,313.0,434.0,313.0];
ctx.beginPath();ctx.moveTo(P[0],P[1]);for(var q=2;q<P.length;q+=2)ctx.lineTo(P[q],P[q+1]);ctx.closePath();
ctx.save();ctx.clip();ctx.drawImage(off,0,0);ctx.restore();
})();
</script>
<script>
(function(){
var c=document.getElementById('sp');var ctx=c.getContext('2d');var W=c.width,H=c.height;
var im=ctx.createImageData(W,H),d=im.data;
var S=[[0,255,0,0],[8,255,0,0],[24,255,128,0],[41,255,255,0],[52,128,255,0],[58,0,255,0],[85,0,255,0],[99,0,255,128],[116,0,255,255],[139,0,128,255],[162,0,0,255],[175,128,0,255],[193,255,0,255],[213,255,0,128],[231,255,0,0],[234,255,0,0]];
var U=[[0,0.47],[8,0.3],[15,0.0],[53,0.0],[66,0.3],[73,0.62],[76,0.75],[116,0.77],[146,0.55],[158,0.3],[166,0.0],[173,0.0],[196,0.38],[216,0.45],[234,0.47]];
var K=[[0,0.05],[41,0.08],[60,0.3],[116,0.3],[150,0.15],[193,0.08],[234,0.05]];
function lerp(A,x,n){for(var q=0;q<A.length-1;q++){if(x<=A[q+1][0]){var t=(x-A[q][0])/(A[q+1][0]-A[q][0]);var r=[];for(var m=1;m<=n;m++)r.push(A[q][m]+(A[q+1][m]-A[q][m])*t);return r;}}var r=[];for(var m=1;m<=n;m++)r.push(A[A.length-1][m]);return r;}
for(var i=0;i<W;i++){var h0=lerp(S,i+0.5,3);var ub=lerp(U,i+0.5,1)[0];var kd=lerp(K,i+0.5,1)[0];
for(var j=0;j<H;j++){var u=(j+0.5)/H;var h=h0;if(i>40&&i<180){var wi=Math.sin(Math.PI*(i-40)/140);h=lerp(S,i+0.5+(96-i)*0.4*wi*Math.min(1,u/0.77),3);}var a=0.25*ub/0.77;var t;
if(u<ub){t=a*u/ub;}else{t=a+(1-a)*Math.pow((u-ub)/(1-ub),0.9);}
if(t>1)t=1;var k=(j*W+i)*4;
var dk=1-kd*Math.min(1,u/0.6);
d[k]=h[0]*dk*(1-t)+128*t;d[k+1]=h[1]*dk*(1-t)+128*t;d[k+2]=h[2]*dk*(1-t)+128*t;d[k+3]=255;}}
ctx.putImageData(im,0,0);
})();
</script>
</body></html>
